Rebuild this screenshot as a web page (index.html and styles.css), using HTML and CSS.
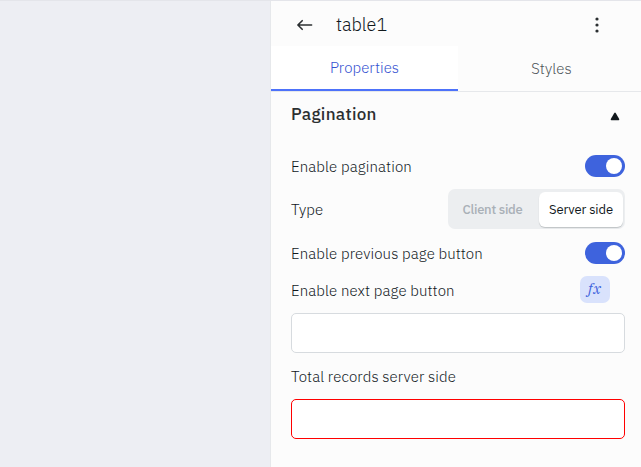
FILE: index.html
```html
<!DOCTYPE html>
<html lang="en">
<head>
<meta charset="utf-8">
<title>table1</title>
<link rel="stylesheet" href="styles.css">
</head>
<body>
<div class="editor">
  <main class="canvas"></main>
  <aside class="inspector">
    <header class="header">
      <svg class="back" width="16" height="12" viewBox="0 0 16 12"><path d="M14.6 6H1.5M5.2 1.7L.9 6L5.2 10.3" fill="none" stroke="#2b2f31" stroke-width="1.6" stroke-linecap="round" stroke-linejoin="round"/></svg>
      <span class="name">table1</span>
      <svg class="menu" width="4" height="16" viewBox="0 0 4 16" fill="#2b2f31"><circle cx="2" cy="2" r="1.6"/><circle cx="2" cy="8" r="1.6"/><circle cx="2" cy="14" r="1.6"/></svg>
    </header>
    <nav class="tabs">
      <div class="tab active"><span>Properties</span></div>
      <div class="tab"><span>Styles</span></div>
    </nav>
    <section class="section">
      <div class="row title"><span class="heading">Pagination</span>
        <svg class="caret" width="10" height="9" viewBox="0 0 10 9"><path d="M4.3 1.1Q5 .1 5.7 1.1L9.2 7Q9.6 8.3 8.5 8.3H1.5Q.4 8.3 .8 7Z" fill="#11181c"/></svg>
      </div>
      <div class="row enable"><span>Enable pagination</span><span class="toggle"></span></div>
      <div class="row type"><span>Type</span>
        <div class="segmented"><span class="option client">Client side</span><span class="option selected">Server side</span></div>
      </div>
      <div class="row previous"><span>Enable previous page button</span><span class="toggle"></span></div>
      <div class="row next"><span>Enable next page button</span><span class="fx">fx</span></div>
      <div class="input"></div>
      <div class="row total"><span>Total records server side</span></div>
      <div class="input error"></div>
    </section>
  </aside>
</div>
</body>
</html>
```
FILE: styles.css
```css
* { box-sizing: border-box; }
body { margin: 0; background: #fcfcfd; color: #11181c; font: 300 15px/20px "IBM Plex Sans", Roboto, sans-serif; letter-spacing: .1px; }
.editor { display: flex; height: 467px; overflow: hidden; border-top: 1px solid #e4e5ea; white-space: nowrap; }
.canvas { width: 270px; background: #edeef3; }
.inspector { width: 371px; border-left: 1px solid #e6e8eb; background: #fcfcfc; }
.header { display: flex; align-items: center; height: 45px; padding: 3px 42px 0 26px; }
.name { margin-left: 23px; font-size: 18px; letter-spacing: 0; }
.menu { margin-left: auto; }
.tabs { display: flex; height: 46px; border-bottom: 1px solid #e6e8eb; }
.tab { flex: none; width: 187px; display: flex; align-items: center; justify-content: center; height: 45px; color: #4c5459; }
.active { height: 45px; padding-top: 1px; background: #fff; border-bottom: 2px solid #4d72fa; color: #3451d1; letter-spacing: .05px; }
.section { padding: 0 16px 0 20px; }
.row { display: flex; align-items: center; justify-content: space-between; }
.title { height: 46px; padding: 0 5px 2px 0; }
.heading { color: #2b2f31; font-size: 17px; font-weight: 500; letter-spacing: .3px; }
.caret { margin-top: 4px; }
.enable { height: 57px; }
.enable .toggle { margin-bottom: 1px; }
.enable > span:first-child { padding-top: 1px; }
.type { height: 28px; }
.type > span { padding-top: 2px; }
.toggle { display: flex; justify-content: flex-end; width: 40px; height: 22px; padding: 3px; border-radius: 11px; background: #3e63dd; }
.toggle::after { content: ""; width: 16px; height: 16px; border-radius: 50%; background: #fff; }
.segmented { display: flex; width: 177px; height: 40px; padding: 3px 2px 2px; border-radius: 7px; background: #eceef0; font-size: 13px; font-weight: 400; letter-spacing: -.1px; }
.option { display: flex; align-items: center; justify-content: center; width: 89px; height: 35px; color: #a9b0b7; }
.client { padding-right: 4px; font-weight: 500; letter-spacing: -.25px; }
.selected { width: 84px; background: #fff; border-radius: 6px; color: #11181c; box-shadow: 0 1px 1px #11181c33; }
.previous { height: 59px; }
.previous > span:first-child { padding-top: 2px; }
.next { height: 15px; padding-right: 15px; }
.next > span:first-child { padding-top: 2px; }
.fx { width: 30px; height: 27px; border-radius: 7px; background: #d9e2fc; color: #3e63dd; font: italic 400 14px/27px "IBM Plex Serif", "DejaVu Serif", serif; text-align: center; letter-spacing: .8px; }
.input { height: 40px; border: 1px solid #d7dbdf; border-radius: 5px; background: #fff; }
.next + .input { margin-top: 16px; }
.total { height: 46px; padding-top: 2px; }
.error { border-color: #f00; }
```
